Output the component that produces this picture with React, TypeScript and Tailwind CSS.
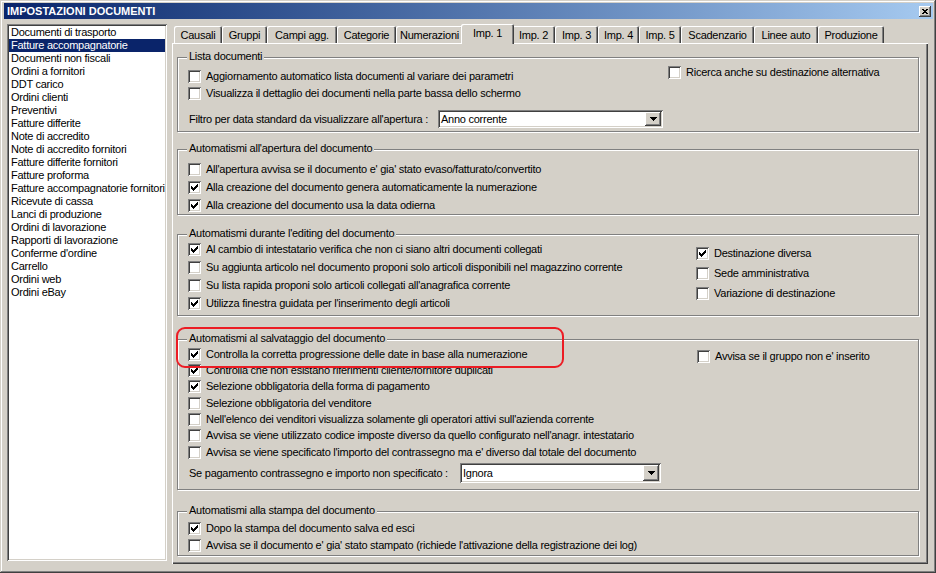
import React from "react";

const RAISED =
  "shadow-[inset_-1px_-1px_0_#404040,inset_1px_1px_0_#fff,inset_-2px_-2px_0_#808080,inset_2px_2px_0_#d4d0c8]";
const SUNKEN =
  "shadow-[inset_1px_1px_0_#808080,inset_-1px_-1px_0_#fff,inset_2px_2px_0_#404040,inset_-2px_-2px_0_#d4d0c8]";

const documents = [
  "Documenti di trasporto",
  "Fatture accompagnatorie",
  "Documenti non fiscali",
  "Ordini a fornitori",
  "DDT carico",
  "Ordini clienti",
  "Preventivi",
  "Fatture differite",
  "Note di accredito",
  "Note di accredito fornitori",
  "Fatture differite fornitori",
  "Fatture proforma",
  "Fatture accompagnatorie fornitori",
  "Ricevute di cassa",
  "Lanci di produzione",
  "Ordini di lavorazione",
  "Rapporti di lavorazione",
  "Conferme d'ordine",
  "Carrello",
  "Ordini web",
  "Ordini eBay",
];

const tabs = [
  { label: "Causali", w: "w-[48px]" },
  { label: "Gruppi", w: "w-[45px]" },
  { label: "Campi agg.", w: "w-[70px]" },
  { label: "Categorie", w: "w-[59px]" },
  { label: "Numerazioni", w: "w-[67px]" },
  { label: "Imp. 1", w: "w-[53px]", active: true },
  { label: "Imp. 2", w: "w-[43px]" },
  { label: "Imp. 3", w: "w-[43px]" },
  { label: "Imp. 4", w: "w-[41px]" },
  { label: "Imp. 5", w: "w-[42px]" },
  { label: "Scadenzario", w: "w-[73px]" },
  { label: "Linee auto", w: "w-[64px]" },
  { label: "Produzione", w: "w-[66px]" },
];

// classic 7x7 check glyph, pixel rows
const checkPixels: [number, number, number][] = [
  [3, 9, 9],
  [4, 8, 9],
  [5, 3, 3],
  [5, 7, 9],
  [6, 3, 4],
  [6, 6, 8],
  [7, 3, 7],
  [8, 4, 6],
  [9, 5, 5],
];

function CheckBox({ on }: { on?: boolean }) {
  return (
    <span className={`relative block w-[13px] h-[13px] shrink-0 bg-white ${SUNKEN}`}>
      {on && (
        <svg className="absolute inset-0" width="13" height="13" shapeRendering="crispEdges">
          {checkPixels.map(([y, x1, x2], i) => (
            <rect key={i} x={x1} y={y} width={x2 - x1 + 1} height={1} fill="#000" />
          ))}
        </svg>
      )}
    </span>
  );
}

function Opt({ label, on, h }: { label: string; on?: boolean; h: string }) {
  return (
    <div className={`flex items-center gap-[5px] whitespace-nowrap ${h}`}>
      <CheckBox on={on} />
      <span className="leading-[13px]">{label}</span>
    </div>
  );
}

function Combo({ value, size }: { value: string; size: string }) {
  return (
    <div className={`flex bg-white p-[2px] ${SUNKEN} ${size}`}>
      <span className="flex-1 pl-[1px] leading-[14px] self-center">{value}</span>
      <span className={`w-[16px] h-full bg-[#d4d0c8] flex items-center justify-center ${RAISED}`}>
        <svg width="7" height="4" shapeRendering="crispEdges">
          <rect x="0" y="0" width="7" height="1" fill="#000" />
          <rect x="1" y="1" width="5" height="1" fill="#000" />
          <rect x="2" y="2" width="3" height="1" fill="#000" />
          <rect x="3" y="3" width="1" height="1" fill="#000" />
        </svg>
      </span>
    </div>
  );
}

function Group({
  title,
  className,
  children,
}: {
  title: string;
  className: string;
  children: React.ReactNode;
}) {
  return (
    <div
      className={`relative w-[742px] border border-[#808080] shadow-[1px_1px_0_#fff,inset_1px_1px_0_#fff] ${className}`}
    >
      <span className="absolute left-[9px] top-[-8px] bg-[#d4d0c8] px-[2px] leading-[13px] whitespace-nowrap">
        {title}
      </span>
      {children}
    </div>
  );
}

export default function App() {
  return (
    <div
      className={`relative w-[936px] h-[573px] overflow-hidden bg-[#d4d0c8] pt-[3px] pl-[4px] pr-[3px] text-black font-['Liberation_Sans',Arial,sans-serif] text-[11px] tracking-[-0.25px] shadow-[inset_-1px_-1px_0_#404040,inset_1px_1px_0_#d4d0c8,inset_-2px_-2px_0_#808080,inset_2px_2px_0_#fff]`}
    >
      {/* title bar */}
      <div className="flex items-center h-[16px] bg-linear-to-r from-[#0a246a] to-[#a6caf0] pl-[3px] pr-[2px]">
        <span className="flex-1 text-white font-bold tracking-normal leading-[14px]">
          IMPOSTAZIONI DOCUMENTI
        </span>
        <span className={`w-[12px] h-[11px] bg-[#d4d0c8] flex items-center justify-center ${RAISED}`}>
          <svg width="6" height="5" shapeRendering="crispEdges">
            <rect x="0" y="0" width="2" height="1" fill="#000" />
            <rect x="4" y="0" width="2" height="1" fill="#000" />
            <rect x="1" y="1" width="4" height="1" fill="#000" />
            <rect x="2" y="2" width="2" height="1" fill="#000" />
            <rect x="1" y="3" width="4" height="1" fill="#000" />
            <rect x="0" y="4" width="2" height="1" fill="#000" />
            <rect x="4" y="4" width="2" height="1" fill="#000" />
          </svg>
        </span>
      </div>

      <div className="flex mt-[5px] ml-[3px]">
        {/* document list */}
        <div className={`w-[160px] h-[537px] bg-white p-[2px] ${SUNKEN}`}>
          {documents.map((d, i) => (
            <div
              key={d}
              className={`h-[13px] leading-[13px] pl-[2px] whitespace-nowrap overflow-hidden ${
                i === 1 ? "bg-[#0a246a] text-white" : ""
              }`}
            >
              {d}
            </div>
          ))}
        </div>

        {/* tab control */}
        <div className="ml-[5px] flex flex-col">
          <div className="flex items-end h-[19px] pl-[2px]">
            {tabs.map((t) =>
              t.active ? (
                <div
                  key={t.label}
                  className={`relative z-10 -mb-[1px] -mx-[2px] h-[20px] ${t.w} bg-[#d4d0c8] rounded-t-[2px] flex justify-center pt-[3px] leading-[13px] shadow-[inset_1px_1px_0_#fff,inset_-1px_0_0_#404040,inset_-2px_0_0_#808080]`}
                >
                  {t.label}
                </div>
              ) : (
                <div
                  key={t.label}
                  className={`h-[17px] ${t.w} rounded-t-[2px] flex justify-center pt-[3px] leading-[13px] shadow-[inset_1px_1px_0_#fff,inset_-1px_0_0_#404040,inset_-2px_0_0_#808080]`}
                >
                  {t.label}
                </div>
              )
            )}
          </div>

          <div className="w-[756px] h-[521px] bg-[#d4d0c8] pt-[14px] pl-[5px] flex flex-col shadow-[inset_1px_1px_0_#fff,inset_-1px_-1px_0_#404040,inset_-2px_-2px_0_#808080]">
            <Group title="Lista documenti" className="h-[75px]">
              <div className="flex pt-[5px] pl-[10px]">
                <div className="w-[480px] pt-[5px]">
                  <Opt h="h-[17px]" label="Aggiornamento automatico lista documenti al variare dei parametri" />
                  <Opt h="h-[17px]" label="Visualizza il dettaglio dei documenti nella parte bassa dello schermo" />
                </div>
                <div className="pt-[1px]">
                  <Opt h="h-[17px]" label="Ricerca anche su destinazione alternativa" />
                </div>
              </div>
              <div className="flex items-center mt-[8px] pl-[11px] h-[18px]">
                <span className="w-[249px] whitespace-nowrap">
                  Filtro per data standard da visualizzare all'apertura :
                </span>
                <Combo value="Anno corrente" size="w-[225px] h-[18px]" />
              </div>
            </Group>

            <Group title="Automatismi all'apertura del documento" className="mt-[17px] h-[66px]">
              <div className="pt-[10px] pl-[10px]">
                <Opt h="h-[18px]" label="All'apertura avvisa se il documento e' gia' stato evaso/fatturato/convertito" />
                <Opt h="h-[18px]" on label="Alla creazione del documento genera automaticamente la numerazione" />
                <Opt h="h-[18px]" on label="Alla creazione del documento usa la data odierna" />
              </div>
            </Group>

            <Group title="Automatismi durante l'editing del documento" className="mt-[19px] h-[82px]">
              <div className="flex pl-[10px]">
                <div className="w-[508px] pt-[5px]">
                  <Opt h="h-[18px]" on label="Al cambio di intestatario verifica che non ci siano altri documenti collegati" />
                  <Opt h="h-[18px]" label="Su aggiunta articolo nel documento proponi solo articoli disponibili nel magazzino corrente" />
                  <Opt h="h-[18px]" label="Su lista rapida proponi solo articoli collegati all'anagrafica corrente" />
                  <Opt h="h-[18px]" on label="Utilizza finestra guidata per l'inserimento degli articoli" />
                </div>
                <div className="pt-[8px]">
                  <Opt h="h-[20px]" on label="Destinazione diversa" />
                  <Opt h="h-[20px]" label="Sede amministrativa" />
                  <Opt h="h-[20px]" label="Variazione di destinazione" />
                </div>
              </div>
            </Group>

            <Group title="Automatismi al salvataggio del documento" className="mt-[23px] h-[151px]">
              <div className="flex pl-[10px]">
                <div className="w-[509px] pt-[6px]">
                  <Opt h="h-[16.33px]" on label="Controlla la corretta progressione delle date in base alla numerazione" />
                  <Opt h="h-[16.33px]" on label="Controlla che non esistano riferimenti cliente/fornitore duplicati" />
                  <Opt h="h-[16.33px]" on label="Selezione obbligatoria della forma di pagamento" />
                  <Opt h="h-[16.33px]" label="Selezione obbligatoria del venditore" />
                  <Opt h="h-[16.33px]" label="Nell'elenco dei venditori visualizza solamente gli operatori attivi sull'azienda corrente" />
                  <Opt h="h-[16.33px]" label="Avvisa se viene utilizzato codice imposte diverso da quello configurato nell'anagr. intestatario" />
                  <Opt h="h-[16.33px]" label="Avvisa se viene specificato l'importo del contrassegno ma e' diverso dal totale del documento" />
                </div>
                <div className="pt-[8px]">
                  <Opt h="h-[16.33px]" label="Avvisa se il gruppo non e' inserito" />
                </div>
              </div>
              <div className="flex items-center mt-[3px] pl-[11px] h-[20px]">
                <span className="w-[271px] whitespace-nowrap">
                  Se pagamento contrassegno e importo non specificato :
                </span>
                <Combo value="Ignora" size="w-[201px] h-[20px]" />
              </div>
            </Group>

            <Group title="Automatismi alla stampa del documento" className="mt-[21px] h-[45px]">
              <div className="pt-[8px] pl-[10px]">
                <Opt h="h-[17px]" on label="Dopo la stampa del documento salva ed esci" />
                <Opt h="h-[17px]" label="Avvisa se il documento e' gia' stato stampato (richiede l'attivazione della registrazione dei log)" />
              </div>
            </Group>
          </div>
        </div>
      </div>

      {/* red highlight annotation */}
      <div className="absolute left-[176px] top-[327px] w-[388px] h-[41px] border-2 border-[#ec1c24] rounded-[9px] pointer-events-none" />
    </div>
  );
}
